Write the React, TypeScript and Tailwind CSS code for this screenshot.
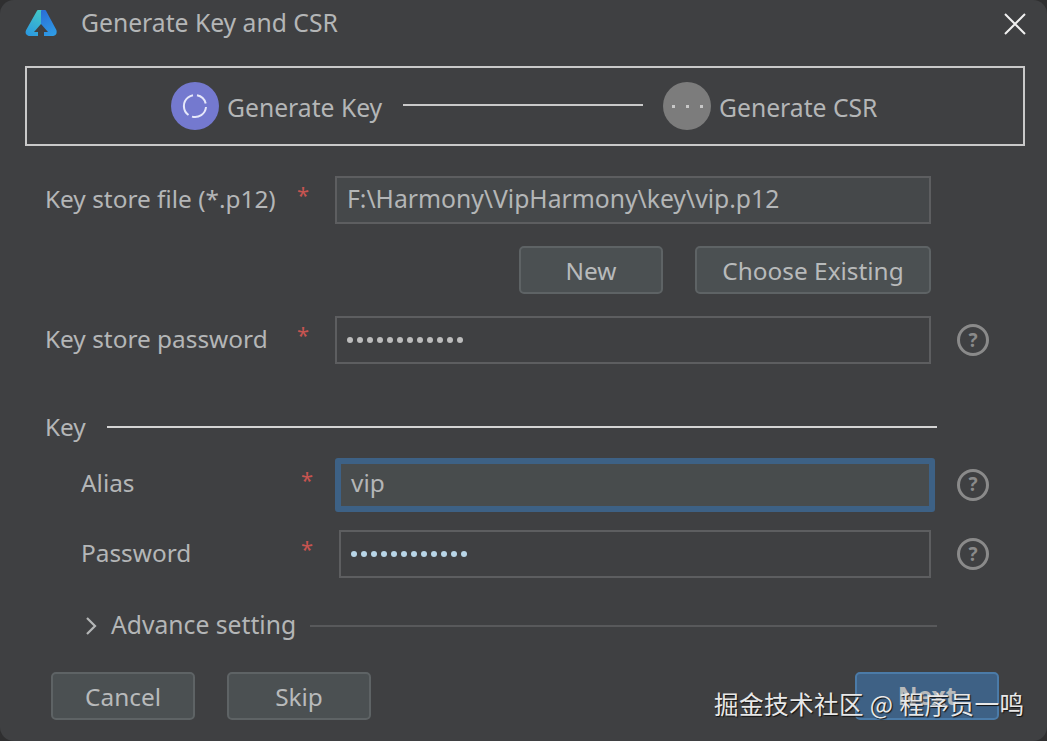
import React from "react";

const font = "font-['Noto_Sans','Open_Sans',sans-serif]";

const Logo = () => (
  <svg width="34" height="30" viewBox="0 0 34 30" fill="none">
    <defs>
      <linearGradient id="lg" x1="2" y1="27" x2="17" y2="2" gradientUnits="userSpaceOnUse">
        <stop offset="0" stopColor="#2a96e2" />
        <stop offset="1" stopColor="#43c8c6" />
      </linearGradient>
      <linearGradient id="rg" x1="18" y1="2" x2="32" y2="27" gradientUnits="userSpaceOnUse">
        <stop offset="0" stopColor="#2a6fd8" />
        <stop offset="1" stopColor="#2f9fe6" />
      </linearGradient>
    </defs>
    <path d="M14 2 L18 2 L18 26 L5 26 Q1.5 25 3 21.5 Z" fill="url(#lg)" stroke="url(#lg)" strokeWidth="2" strokeLinejoin="round" />
    <path d="M18 2 L21 2 L31.5 21.5 Q32.5 25 29 26 L18 26 Z" fill="url(#rg)" stroke="url(#rg)" strokeWidth="2" strokeLinejoin="round" />
    <path d="M17 15 L24 23 L20 23 L20 28 L14 28 L14 23 L10 23 Z" fill="#3f4042" />
  </svg>
);

const Star = ({ className }: { className: string }) => (
  <span className={`-translate-y-[6px] text-[22px] leading-none text-[#c75450] ${className}`}>*</span>
);

const Help = () => (
  <span className="flex h-[32px] w-[32px] shrink-0 items-center justify-center rounded-full border-[3px] border-[#8a8a8a] text-[19px] font-bold leading-none text-[#8a8a8a]">
    ?
  </span>
);

const Dots = ({ color }: { color: string }) => (
  <div className="flex gap-[4px]">
    {Array.from({ length: 12 }).map((_, i) => (
      <span key={i} className={`h-[6px] w-[6px] rounded-full ${color}`} />
    ))}
  </div>
);

const Btn = ({ label, className }: { label: string; className: string }) => (
  <button
    type="button"
    className={`flex h-[48px] items-center justify-center rounded-[5px] border-2 border-[#5e6365] bg-[#4b5052] pt-[2px] text-[24.4px] text-[#b8babb] ${className}`}
  >
    {label}
  </button>
);

export default function App() {
  return (
    <div className={`h-[741px] w-[1047px] overflow-hidden bg-[#2f2f30] ${font}`}>
      <div className="relative flex h-full flex-col rounded-[14px] bg-[#3f4042] text-[24.4px] text-[#b4b6b7]">
        {/* title bar */}
        <div className="flex h-[47px] items-center pl-[24px] pr-[21px]">
          <Logo />
          <span className="ml-[23px] text-[24.7px] leading-none">Generate Key and CSR</span>
          <svg className="ml-auto" width="22" height="22" viewBox="0 0 22 22" stroke="#f0f0f0" strokeWidth="2">
            <path d="M1 1 L21 21 M21 1 L1 21" />
          </svg>
        </div>

        {/* steps */}
        <div className="ml-[25px] mr-[22px] mt-[19px] flex h-[80px] items-center border-2 border-[#c9c9c9] pl-[144px] text-[24.7px]">
          <span className="flex h-[48px] w-[48px] items-center justify-center rounded-full bg-[#7479cf]">
            <svg width="26" height="26" viewBox="0 0 26 26" fill="none" stroke="#e6e8fa" strokeWidth="2">
              <path d="M15 2.3 A11 11 0 0 1 23.7 10.5 M24 14 A11 11 0 0 1 10 23.6 M6.5 22 A11 11 0 0 1 6 4.5 A11 11 0 0 1 11 2.2" />
            </svg>
          </span>
          <span className="ml-[8px] w-[155px] pt-[3px] whitespace-nowrap">Generate Key</span>
          <span className="ml-[21px] h-[2px] w-[240px] -translate-y-[1px] bg-[#c9c9c9]" />
          <span className="ml-[20px] flex h-[48px] w-[48px] items-center justify-center gap-[11px] rounded-full bg-[#7c7c7c]">
            <i className="h-[3px] w-[3px] bg-[#c8c8c8]" />
            <i className="h-[3px] w-[3px] bg-[#c8c8c8]" />
            <i className="h-[3px] w-[3px] bg-[#c8c8c8]" />
          </span>
          <span className="ml-[8px] pt-[3px]">Generate CSR</span>
        </div>

        {/* key store */}
        <div className="mt-[30px] flex h-[48px] items-center pl-[45px]">
          <span className="w-[252px] pb-[2px]">Key store file (*.p12)</span>
          <Star className="w-[38px]" />
          <div className="flex h-full w-[596px] items-center border-2 border-[#5d5e60] bg-[#45484a] pb-[2px] pl-[10px] text-[24.7px]">
            F:\Harmony\VipHarmony\key\vip.p12
          </div>
        </div>
        <div className="mt-[22px] flex justify-end gap-[32px] pr-[116px]">
          <Btn label="New" className="w-[144px]" />
          <Btn label="Choose Existing" className="w-[236px]" />
        </div>
        <div className="mt-[22px] flex h-[48px] items-center pl-[45px]">
          <span className="w-[252px] pb-[2px]">Key store password</span>
          <Star className="w-[38px]" />
          <div className="flex h-full w-[596px] items-center border-2 border-[#5d5e60] pl-[10px]">
            <Dots color="bg-[#bdbdbd]" />
          </div>
          <span className="ml-[26px]">
            <Help />
          </span>
        </div>

        {/* key section */}
        <div className="mt-[46px] flex h-[34px] items-center pl-[45px] pr-[110px]">
          <span className="w-[62px]">Key</span>
          <span className="h-[2px] flex-1 bg-[#d4d4d4]" />
        </div>
        <div className="mt-[14px] flex h-[54px] items-center pl-[81px]">
          <span className="w-[220px] pb-[3px]">Alias</span>
          <Star className="w-[34px]" />
          <div className="flex h-full w-[600px] items-center rounded-[3px] border-[6px] border-[#3d6185] bg-[#484c4d] pb-[3px] pl-[10px]">
            vip
          </div>
          <span className="ml-[22px] pb-[1px]">
            <Help />
          </span>
        </div>
        <div className="mt-[18px] flex h-[48px] items-center pl-[81px]">
          <span className="w-[220px] pb-[2px]">Password</span>
          <Star className="w-[38px]" />
          <div className="flex h-full w-[592px] items-center border-2 border-[#5d5e60] pl-[10px]">
            <Dots color="bg-[#b9d6e8]" />
          </div>
          <span className="ml-[26px]">
            <Help />
          </span>
        </div>

        {/* advance */}
        <div className="mt-[30px] flex h-[36px] items-center pl-[85px] pr-[110px]">
          <svg width="12" height="20" viewBox="0 0 12 20" fill="none" stroke="#b4b6b7" strokeWidth="2.2">
            <path d="M2 2 L10 10 L2 18" />
          </svg>
          <span className="ml-[14px] pb-[2px] text-[24.7px]">Advance setting</span>
          <span className="ml-[14px] h-[2px] flex-1 bg-[#58595b]" />
        </div>

        {/* footer */}
        <div className="mt-[28px] flex gap-[32px] pl-[51px]">
          <Btn label="Cancel" className="w-[144px]" />
          <Btn label="Skip" className="w-[144px]" />
          <button
            type="button"
            className="ml-[452px] h-[48px] w-[144px] rounded-[5px] border-2 border-[#4b7ba8] bg-[#3e6185] text-[24.4px] font-bold text-[#b8babb]"
          >
            Next
          </button>
        </div>

        {/* watermark */}
        <span className="absolute left-[714px] top-[686px] whitespace-nowrap font-['Noto_Sans_CJK_SC',sans-serif] text-[24.6px] leading-[34px] tracking-[0.4px] text-[#e8e8e8] [text-shadow:1px_1px_1px_#111]">
          掘金技术社区 @ 程序员一鸣
        </span>
      </div>
    </div>
  );
}
